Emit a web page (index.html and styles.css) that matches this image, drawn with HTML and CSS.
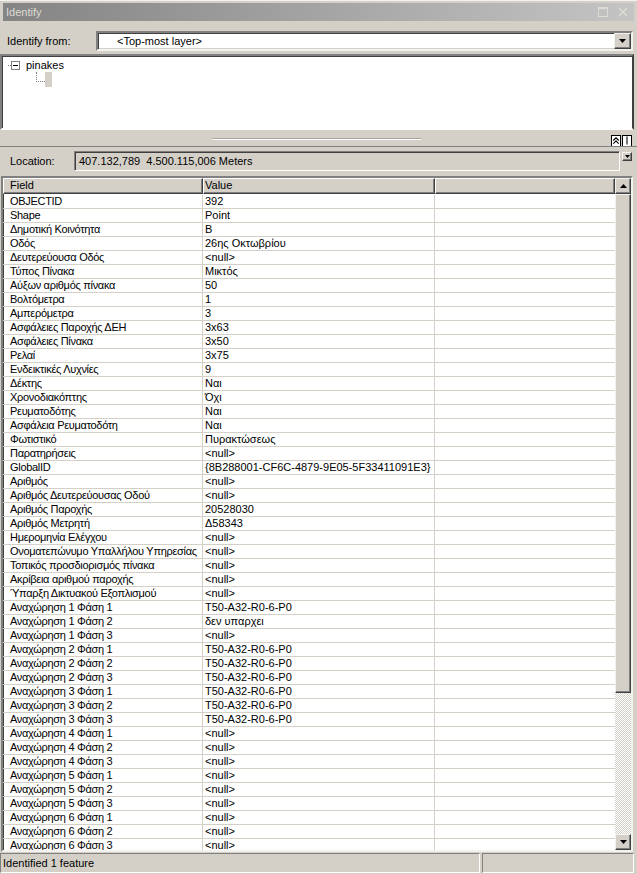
FILE: index.html
```html
<!DOCTYPE html>
<html>
<head>
<meta charset="utf-8">
<title>Identify</title>
<link rel="stylesheet" href="styles.css">
</head>
<body>
<div class="app">
  <div class="titlebar">
    <span class="title">Identify</span>
    <span class="tb-icons">
      <svg width="10" height="10" viewBox="0 0 10 10"><rect x="0.5" y="0.5" width="9" height="9" fill="none" stroke="#dedbd4"/><line x1="0" y1="1.5" x2="10" y2="1.5" stroke="#dedbd4"/></svg>
      <svg width="10" height="10" viewBox="0 0 10 10"><path d="M1 1 L9 9 M9 1 L1 9" stroke="#dedbd4" stroke-width="1.4"/></svg>
    </span>
  </div>

  <div class="from-row">
    <span class="from-label">Identify from:</span>
    <div class="combo">
      <span class="combo-text">&lt;Top-most layer&gt;</span>
      <span class="btn combo-btn"><svg width="7" height="4" viewBox="0 0 7 4"><path d="M0 0 H7 L3.5 4 Z" fill="#000"/></svg></span>
    </div>
  </div>

  <div class="tree">
    <div class="tree-node">
      <span class="tree-tick"></span>
      <span class="tree-box"><span class="minus"></span></span>
      <span class="tree-label">pinakes</span>
    </div>
    <div class="tree-child">
      <span class="tree-branch"></span>
      <span class="tree-leaf"></span>
    </div>
  </div>

  <div class="splitter">
    <span class="grip"></span>
    <span class="split-btns">
      <span class="sbtn"><svg width="9" height="9" viewBox="0 0 9 9"><path d="M1.5 4.5 L4.5 1.5 L7.5 4.5 M1.5 8 L4.5 5 L7.5 8" fill="none" stroke="#000" stroke-width="1.3"/></svg></span>
      <span class="sbtn"><svg width="9" height="9" viewBox="0 0 9 9"><line x1="4.5" y1="0" x2="4.5" y2="9" stroke="#000" stroke-width="1.2"/></svg></span>
    </span>
  </div>

  <div class="loc-row">
    <span class="loc-label">Location:</span>
    <div class="loc-field">407.132,789&nbsp; 4.500.115,006 Meters</div>
    <span class="btn loc-btn"><svg width="5" height="3" viewBox="0 0 5 3"><path d="M0 0 H5 L2.5 3 Z" fill="#000"/></svg></span>
  </div>

  <div class="table">
    <div class="grid-area">
      <div class="hdr">
        <div class="hc">Field</div>
        <div class="hc">Value</div>
        <div class="hc"></div>
      </div>
      <div class="rows">
        <div class="row"><div class="c">OBJECTID</div><div class="c">392</div><div class="c"></div></div>
        <div class="row"><div class="c">Shape</div><div class="c">Point</div><div class="c"></div></div>
        <div class="row"><div class="c">Δημοτική Κοινότητα</div><div class="c">Β</div><div class="c"></div></div>
        <div class="row"><div class="c">Οδός</div><div class="c">26ης Οκτωβρίου</div><div class="c"></div></div>
        <div class="row"><div class="c">Δευτερεύουσα Οδός</div><div class="c">&lt;null&gt;</div><div class="c"></div></div>
        <div class="row"><div class="c">Τύπος Πίνακα</div><div class="c">Μικτός</div><div class="c"></div></div>
        <div class="row"><div class="c">Αύξων αριθμός πίνακα</div><div class="c">50</div><div class="c"></div></div>
        <div class="row"><div class="c">Βολτόμετρα</div><div class="c">1</div><div class="c"></div></div>
        <div class="row"><div class="c">Αμπερόμετρα</div><div class="c">3</div><div class="c"></div></div>
        <div class="row"><div class="c">Ασφάλειες Παροχής ΔΕΗ</div><div class="c">3x63</div><div class="c"></div></div>
        <div class="row"><div class="c">Ασφάλειες Πίνακα</div><div class="c">3x50</div><div class="c"></div></div>
        <div class="row"><div class="c">Ρελαί</div><div class="c">3x75</div><div class="c"></div></div>
        <div class="row"><div class="c">Ενδεικτικές Λυχνίες</div><div class="c">9</div><div class="c"></div></div>
        <div class="row"><div class="c">Δέκτης</div><div class="c">Ναι</div><div class="c"></div></div>
        <div class="row"><div class="c">Χρονοδιακόπτης</div><div class="c">Όχι</div><div class="c"></div></div>
        <div class="row"><div class="c">Ρευματοδότης</div><div class="c">Ναι</div><div class="c"></div></div>
        <div class="row"><div class="c">Ασφάλεια Ρευματοδότη</div><div class="c">Ναι</div><div class="c"></div></div>
        <div class="row"><div class="c">Φωτιστικό</div><div class="c">Πυρακτώσεως</div><div class="c"></div></div>
        <div class="row"><div class="c">Παρατηρήσεις</div><div class="c">&lt;null&gt;</div><div class="c"></div></div>
        <div class="row"><div class="c">GlobalID</div><div class="c">{8B288001-CF6C-4879-9E05-5F33411091E3}</div><div class="c"></div></div>
        <div class="row"><div class="c">Αριθμός</div><div class="c">&lt;null&gt;</div><div class="c"></div></div>
        <div class="row"><div class="c">Αριθμός Δευτερεύουσας Οδού</div><div class="c">&lt;null&gt;</div><div class="c"></div></div>
        <div class="row"><div class="c">Αριθμός Παροχής</div><div class="c">20528030</div><div class="c"></div></div>
        <div class="row"><div class="c">Αριθμός Μετρητή</div><div class="c">Δ58343</div><div class="c"></div></div>
        <div class="row"><div class="c">Ημερομηνία Ελέγχου</div><div class="c">&lt;null&gt;</div><div class="c"></div></div>
        <div class="row"><div class="c">Ονοματεπώνυμο Υπαλλήλου Υπηρεσίας</div><div class="c">&lt;null&gt;</div><div class="c"></div></div>
        <div class="row"><div class="c">Τοπικός προσδιορισμός πίνακα</div><div class="c">&lt;null&gt;</div><div class="c"></div></div>
        <div class="row"><div class="c">Ακρίβεια αριθμού παροχής</div><div class="c">&lt;null&gt;</div><div class="c"></div></div>
        <div class="row"><div class="c">Ύπαρξη Δικτυακού Εξοπλισμού</div><div class="c">&lt;null&gt;</div><div class="c"></div></div>
        <div class="row"><div class="c">Αναχώρηση 1 Φάση 1</div><div class="c">T50-A32-R0-6-P0</div><div class="c"></div></div>
        <div class="row"><div class="c">Αναχώρηση 1 Φάση 2</div><div class="c">δεν υπαρχει</div><div class="c"></div></div>
        <div class="row"><div class="c">Αναχώρηση 1 Φάση 3</div><div class="c">&lt;null&gt;</div><div class="c"></div></div>
        <div class="row"><div class="c">Αναχώρηση 2 Φάση 1</div><div class="c">T50-A32-R0-6-P0</div><div class="c"></div></div>
        <div class="row"><div class="c">Αναχώρηση 2 Φάση 2</div><div class="c">T50-A32-R0-6-P0</div><div class="c"></div></div>
        <div class="row"><div class="c">Αναχώρηση 2 Φάση 3</div><div class="c">T50-A32-R0-6-P0</div><div class="c"></div></div>
        <div class="row"><div class="c">Αναχώρηση 3 Φάση 1</div><div class="c">T50-A32-R0-6-P0</div><div class="c"></div></div>
        <div class="row"><div class="c">Αναχώρηση 3 Φάση 2</div><div class="c">T50-A32-R0-6-P0</div><div class="c"></div></div>
        <div class="row"><div class="c">Αναχώρηση 3 Φάση 3</div><div class="c">T50-A32-R0-6-P0</div><div class="c"></div></div>
        <div class="row"><div class="c">Αναχώρηση 4 Φάση 1</div><div class="c">&lt;null&gt;</div><div class="c"></div></div>
        <div class="row"><div class="c">Αναχώρηση 4 Φάση 2</div><div class="c">&lt;null&gt;</div><div class="c"></div></div>
        <div class="row"><div class="c">Αναχώρηση 4 Φάση 3</div><div class="c">&lt;null&gt;</div><div class="c"></div></div>
        <div class="row"><div class="c">Αναχώρηση 5 Φάση 1</div><div class="c">&lt;null&gt;</div><div class="c"></div></div>
        <div class="row"><div class="c">Αναχώρηση 5 Φάση 2</div><div class="c">&lt;null&gt;</div><div class="c"></div></div>
        <div class="row"><div class="c">Αναχώρηση 5 Φάση 3</div><div class="c">&lt;null&gt;</div><div class="c"></div></div>
        <div class="row"><div class="c">Αναχώρηση 6 Φάση 1</div><div class="c">&lt;null&gt;</div><div class="c"></div></div>
        <div class="row"><div class="c">Αναχώρηση 6 Φάση 2</div><div class="c">&lt;null&gt;</div><div class="c"></div></div>
        <div class="row"><div class="c">Αναχώρηση 6 Φάση 3</div><div class="c">&lt;null&gt;</div><div class="c"></div></div>
      </div>
    </div>
    <div class="vscroll">
      <span class="btn sb-btn"><svg width="7" height="4" viewBox="0 0 7 4"><path d="M0 4 H7 L3.5 0 Z" fill="#000"/></svg></span>
      <span class="btn thumb"></span>
      <span class="track"></span>
      <span class="btn sb-btn"><svg width="7" height="4" viewBox="0 0 7 4"><path d="M0 0 H7 L3.5 4 Z" fill="#000"/></svg></span>
    </div>
  </div>

  <div class="status">
    <div class="panel main">Identified 1 feature</div>
    <div class="panel side"></div>
  </div>
</div>
</body>
</html>
```

FILE: styles.css
```css
* { box-sizing: border-box; }
html, body { margin: 0; padding: 0; }
body { background: #d4d0c8; }

.app {
  width: 637px;
  height: 874px;
  background: #d4d0c8;
  display: flex;
  flex-direction: column;
  font-family: "Liberation Sans", Arial, sans-serif;
  font-size: 11px;
  color: #000;
  overflow: hidden;
  box-shadow: inset 0 1px #f4f2ee;
}

.btn {
  display: flex;
  align-items: center;
  justify-content: center;
  background: #d4d0c8;
  border: 1px solid;
  border-color: #f4f2ee #404040 #404040 #f4f2ee;
  box-shadow: inset -1px -1px #808080;
}

/* title */
.titlebar {
  margin: 3px 3px 0 3px;
  height: 18px;
  background: linear-gradient(to right, #848484, #c4c4c4);
  display: flex;
  align-items: center;
  padding: 0 6px 0 3px;
}
.title { color: #dedbd4; font-size: 11px; }
.tb-icons { margin-left: auto; display: flex; gap: 10px; }

/* identify from */
.from-row {
  height: 33px;
  padding: 10px 4px 3px 7px;
  display: flex;
  align-items: center;
}
.from-label { width: 89px; }
.combo {
  flex: 1;
  height: 20px;
  background: #fff;
  border: 2px solid;
  border-color: #808080 #f4f2ee #f4f2ee #808080;
  box-shadow: inset 1px 1px #404040, inset -1px -1px #d4d0c8;
  display: flex;
  align-items: center;
  padding-left: 19px;
}
.combo-text { flex: 1; }
.combo-btn { width: 17px; height: 16px; margin-right: 0; }

/* tree */
.tree {
  height: 76px;
  margin-right: 3px;
  background: #fff;
  border: 2px solid;
  border-color: #808080 #404040 #fff #808080;
  box-shadow: inset 1px 1px #404040;
  padding: 3px 0 0 6px;
}
.tree-node { display: flex; align-items: center; height: 12px; }
.tree-tick { width: 3px; border-top: 1px dotted #808080; }
.tree-box {
  width: 9px; height: 9px;
  border: 1px solid #808080;
  display: flex; align-items: center; justify-content: center;
  margin-right: 6px;
}
.minus { width: 5px; height: 1px; background: #000; }
.tree-label { line-height: 12px; }
.tree-child { display: flex; align-items: flex-end; margin-left: 28px; margin-top: 1px; height: 16px; }
.tree-branch {
  width: 9px; height: 10px;
  border-left: 1px dotted #808080;
  border-bottom: 1px dotted #808080;
  margin-bottom: 4px;
  align-self: flex-start;
}
.tree-leaf { width: 7px; height: 15px; background: #d4d0c8; align-self: flex-start; }

/* splitter */
.splitter {
  height: 16px;
  display: flex;
  align-items: center;
  padding: 0 5px 0 212px;
}
.grip {
  width: 209px;
  height: 2px;
  border-top: 1px solid #a8a6a0;
  border-bottom: 1px solid #fff;
  margin-top: 1px;
}
.split-btns { margin-left: auto; display: flex; gap: 1px; margin-top: 5px; }
.sbtn {
  width: 10px; height: 12px;
  background: #fff;
  border: 1px solid #000;
  display: flex; align-items: center; justify-content: center;
}

/* location */
.loc-row {
  height: 30px;
  border-top: 1px solid #808080;
  display: flex;
  align-items: flex-start;
  padding: 4px 0 0 10px;
}
.loc-label { width: 64px; line-height: 20px; }
.loc-field {
  width: 546px;
  height: 20px;
  border: 1px solid;
  border-color: #808080 #fff #fff #808080;
  box-shadow: inset 1px 1px #404040;
  padding-left: 4px;
  line-height: 18px;
}
.loc-btn { width: 10px; height: 9px; margin: 1px 0 0 2px; }

/* table */
.table {
  height: 676px;
  margin: 0 4px 0 1px;
  border: 2px solid;
  border-color: #808080 #f4f2ee #f4f2ee #808080;
  box-shadow: inset 1px 1px #404040;
  display: flex;
  background: #fff;
}
.grid-area { flex: 1; display: flex; flex-direction: column; overflow: hidden; }
.hdr {
  display: grid;
  grid-template-columns: 200px 232px 1fr;
  height: 16px;
  flex: none;
}
.hc {
  background: #d4d0c8;
  border: 1px solid;
  border-color: #fff #404040 #404040 #fff;
  box-shadow: inset -1px -1px #808080;
  padding-left: 6px;
  line-height: 13px;
}
.hc:nth-child(2) { padding-left: 1px; }
.rows { flex: 1; overflow: hidden; padding-top: 1px; }
.row {
  display: grid;
  grid-template-columns: 200px 232px 1fr;
  height: 14px;
}
.c {
  border-right: 1px solid #d4d0c8;
  border-bottom: 1px solid #d4d0c8;
  line-height: 13px;
  padding-left: 7px;
  white-space: nowrap;
  overflow: hidden;
}
.c:nth-child(1) { letter-spacing: -0.3px; }
.c:nth-child(2) { padding-left: 2px; }
.c:nth-child(3) { border-right: none; }

.vscroll { width: 16px; display: flex; flex-direction: column; }
.sb-btn { height: 16px; flex: none; }
.thumb { height: 499px; flex: none; }
.track {
  flex: 1;
  background: repeating-conic-gradient(#d4d0c8 0 25%, #fff 0 50%) 0 0 / 2px 2px;
}

/* status */
.status {
  height: 21px;
  margin-top: 1px;
  display: flex;
  gap: 2px;
  padding-right: 3px;
}
.panel {
  border: 1px solid;
  border-color: #808080 #fff #fff #808080;
  height: 20px;
  line-height: 18px;
}
.panel.main { width: 480px; padding-left: 2px; }
.panel.side { flex: 1; }
```
